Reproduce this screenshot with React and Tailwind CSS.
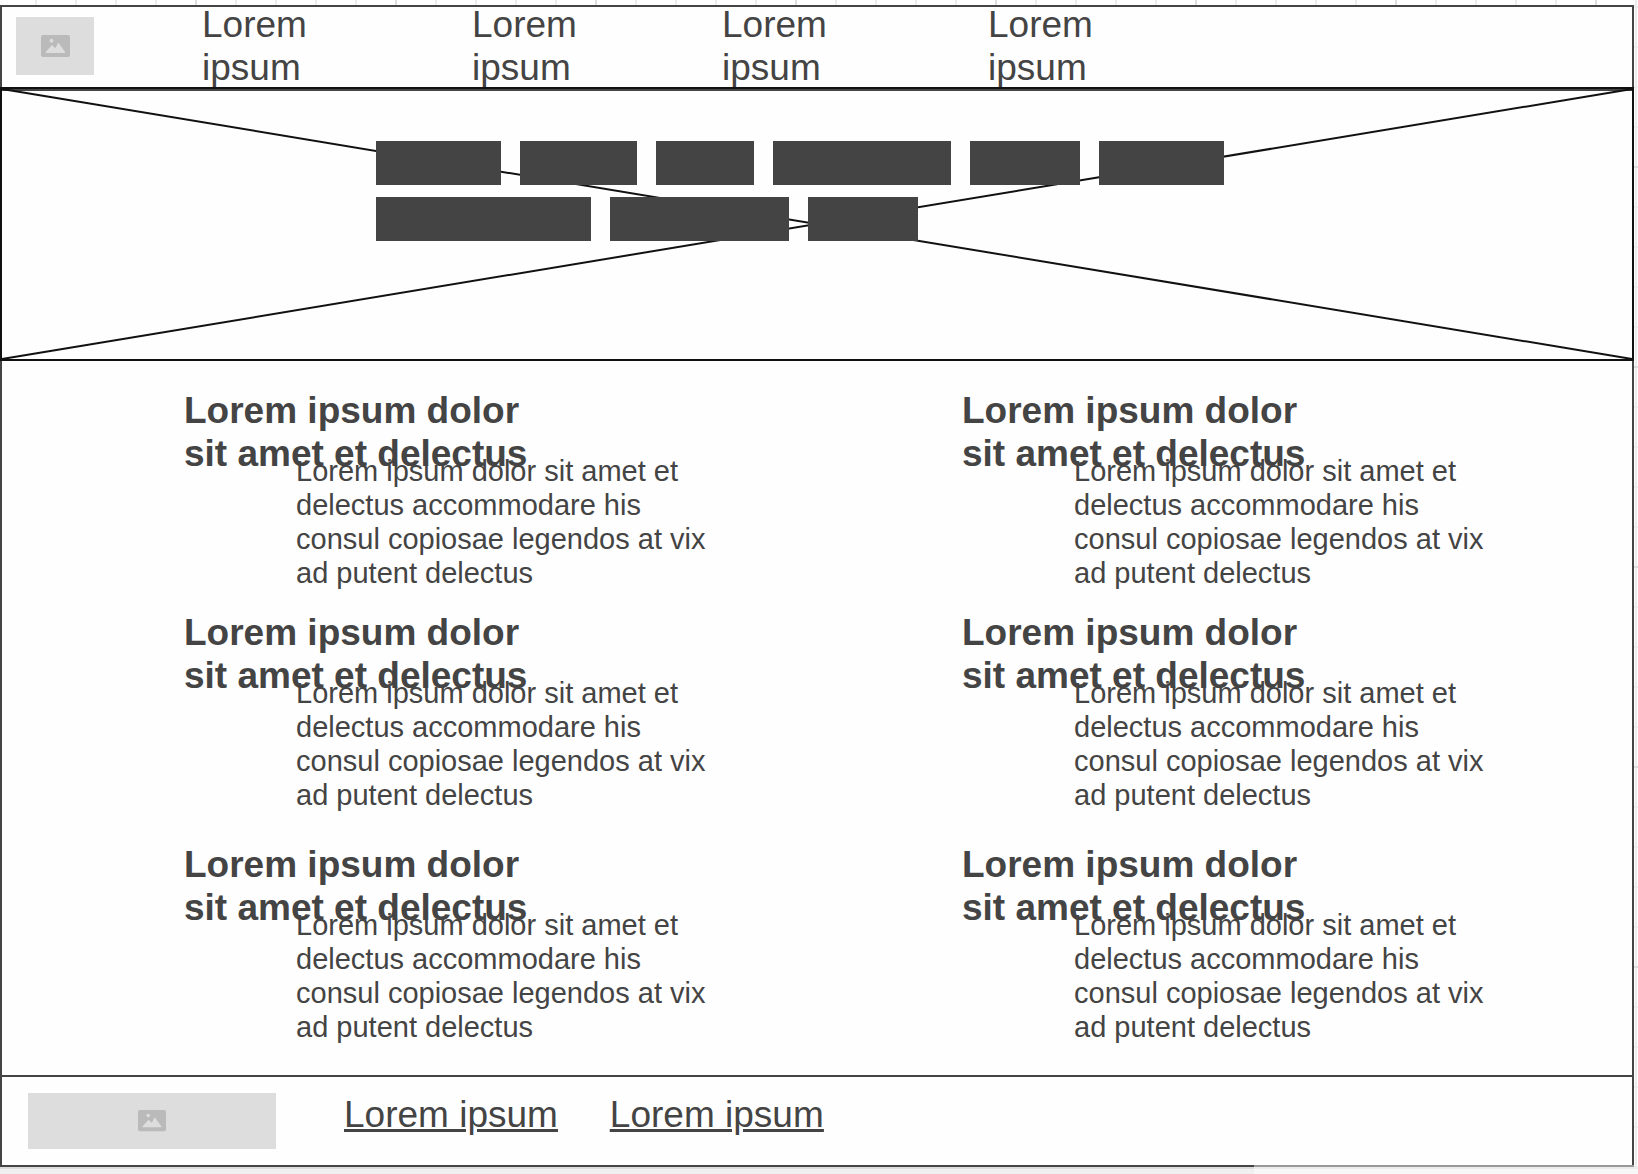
const BLOCK_ROWS = [
  ["w-[125px]", "w-[117px]", "w-[98px]", "w-[178px]", "w-[110px]", "w-[125px]"],
  ["w-[215px]", "w-[179px]", "w-[110px]"],
];

function PictureIcon({ className }) {
  return (
    <svg className={className} viewBox="0 0 29 22" aria-hidden="true">
      <rect width="29" height="22" rx="2" fill="#bababa" />
      <circle cx="10.5" cy="5.7" r="1.9" fill="#ddd" />
      <path d="M4.6 17.2 10.9 10l3.4 3.2L17.3 7.6l7 9.6q0 .8-.8.8H5.4q-.8 0-.8-.8Z" fill="#ddd" />
    </svg>
  );
}

function Placeholder({ className, icon }) {
  return (
    <div className={`flex shrink-0 items-center justify-center bg-[#ddd] ${className}`}>
      <PictureIcon className={icon} />
    </div>
  );
}

function Article() {
  return (
    <article>
      <h2 className="w-[350px] text-[37px] leading-[43px] font-bold">
        Lorem ipsum dolor sit amet et delectus
      </h2>
      <p className="-mt-[21px] ml-28 w-[425px] text-[29px] leading-[34px]">
        Lorem ipsum dolor sit amet et delectus accommodare his consul copiosae legendos at vix ad
        putent delectus
      </p>
    </article>
  );
}

export default function App() {
  return (
    <div className="relative min-h-screen overflow-hidden bg-white bg-[linear-gradient(90deg,#dedede_2px,transparent_2px),linear-gradient(#dedede_2px,transparent_2px),linear-gradient(90deg,#ededed_2px,transparent_2px),linear-gradient(#ededed_2px,transparent_2px)] bg-[length:200px_200px,200px_200px,40px_40px,40px_40px] bg-[position:195px_0,0_166px,35px_0,0_6px] pt-[5px] pr-1 font-['Liberation_Sans',Arial,sans-serif] text-[#444]">
      <div className="bg-[#fefefe]">
        <header className="flex h-[86px] items-center border-2 border-[#444] pb-1 pl-[14px]">
          <Placeholder className="h-[58px] w-[78px]" icon="w-[29px]" />
          <nav className="ml-[108px] grid flex-1 grid-cols-[270fr_250fr_266fr_644fr] text-[37px] leading-[43px]">
            {[0, 1, 2, 3].map((item) => (
              <a key={item} href="#" className="w-28">
                Lorem ipsum
              </a>
            ))}
          </nav>
        </header>

        <section className="relative -mt-1 h-[274px] border-2 border-[#111] pt-[52px] pl-[374px]">
          <svg className="absolute inset-0 h-full w-full overflow-visible" aria-hidden="true">
            <line x1="0" y1="0" x2="100%" y2="100%" stroke="#111" strokeWidth="2" />
            <line x1="0" y1="100%" x2="100%" y2="0" stroke="#111" strokeWidth="2" />
          </svg>
          <div className="relative flex flex-col gap-3">
            {BLOCK_ROWS.map((row, index) => (
              <div key={index} className="flex gap-[19px]">
                {row.map((width, block) => (
                  <span key={block} className={`h-11 bg-[#444] ${width}`} />
                ))}
              </div>
            ))}
          </div>
        </section>

        <main className="grid grid-cols-[778fr_670fr] grid-rows-[222px_232px_auto] border-x-2 border-[#444] pt-7 pb-[31px] pl-[182px]">
          {[0, 1, 2, 3, 4, 5].map((item) => (
            <Article key={item} />
          ))}
        </main>

        <footer className="flex h-[92px] items-start border-2 border-[#444] pt-4 pl-[26px]">
          <Placeholder className="h-14 w-[248px]" icon="w-7" />
          <nav className="ml-[68px] flex gap-[52px] text-[37px] leading-[43px] underline">
            <a href="#">Lorem ipsum</a>
            <a href="#">Lorem ipsum</a>
          </nav>
        </footer>
      </div>

      <div className="-mr-1 h-[7px] border-t-2 border-[#dcdcdc] bg-[#f0f0f0]" />
      <div className="absolute right-0 bottom-0 h-[9px] w-[384px] bg-white/45" />
    </div>
  );
}
